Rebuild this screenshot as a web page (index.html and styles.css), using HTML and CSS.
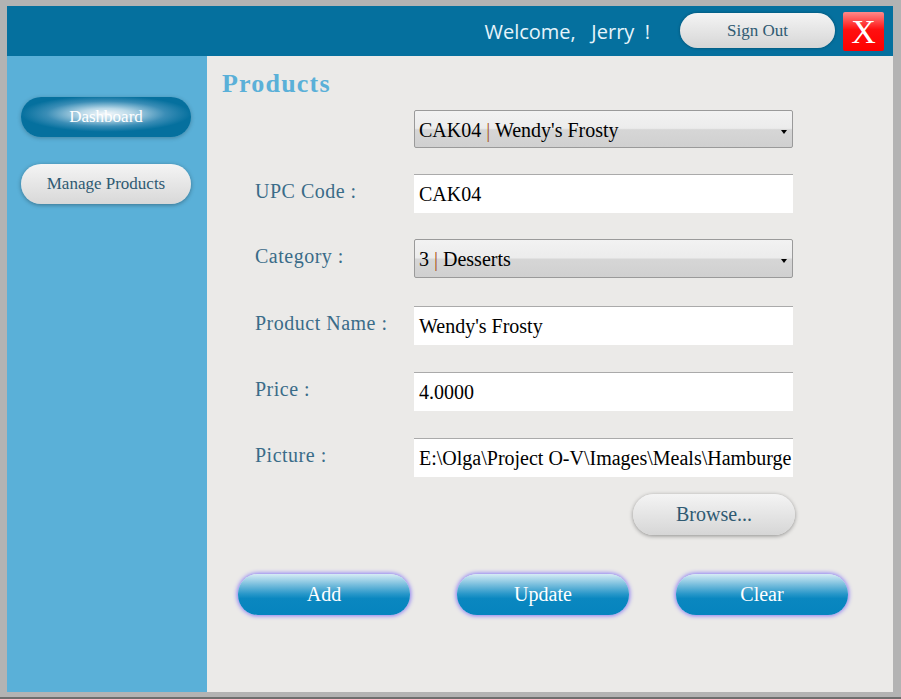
FILE: index.html
```html
<!DOCTYPE html>
<html>
<head>
<meta charset="utf-8">
<link rel="stylesheet" href="styles.css">
</head>
<body>
<div class="app">
  <header class="topbar">
    <span class="welcome">Welcome,&nbsp;&nbsp; Jerry &nbsp;!</span>
    <button class="signout">Sign Out</button>
    <button class="close">X</button>
  </header>
  <div class="main">
    <nav class="sidebar">
      <button class="nav-btn active">Dashboard</button>
      <button class="nav-btn">Manage Products</button>
    </nav>
    <section class="content">
      <h1 class="title">Products</h1>
      <div class="form">
        <span class="label"></span>
        <div class="select first"><span>CAK04 <i class="sep">|</i> Wendy's Frosty</span><b class="arrow"></b></div>
        <span class="label">UPC Code :</span>
        <div class="input">CAK04</div>
        <span class="label">Category :</span>
        <div class="select"><span>3 <i class="sep">|</i> Desserts</span><b class="arrow"></b></div>
        <span class="label">Product Name :</span>
        <div class="input">Wendy's Frosty</div>
        <span class="label">Price :</span>
        <div class="input">4.0000</div>
        <span class="label">Picture :</span>
        <div class="input">E:\Olga\Project O-V\Images\Meals\Hamburge</div>
      </div>
      <div class="browse-row">
        <button class="browse">Browse...</button>
      </div>
      <div class="actions">
        <button class="action">Add</button>
        <button class="action">Update</button>
        <button class="action">Clear</button>
      </div>
    </section>
  </div>
</div>
</body>
</html>
```

FILE: styles.css
```css
* { box-sizing: border-box; }
html, body { margin: 0; padding: 0; }
body {
  width: 901px;
  height: 699px;
  background: #b3b3b3;
  padding: 6px 8px 7px 7px;
  overflow: hidden;
  font-family: "Liberation Serif", serif;
  border-bottom: 2px solid #6e6e6e;
}
.app {
  width: 886px;
  height: 686px;
  display: flex;
  flex-direction: column;
}
.topbar {
  height: 50px;
  background: #05709e;
  display: flex;
  align-items: center;
  justify-content: flex-end;
  padding-right: 9px;
}
.welcome {
  font-family: "Open Sans", sans-serif;
  font-size: 20px;
  color: #e6f4fb;
  margin-right: 30px;
  margin-top: 1px;
  white-space: pre;
}
.signout {
  width: 155px;
  height: 35px;
  border: none;
  border-radius: 18px;
  background: linear-gradient(#f4f4f4, #d6d6d6);
  box-shadow: 0 0 3px rgba(0,0,0,0.35);
  font-family: "Liberation Serif", serif;
  font-size: 17px;
  color: #2f5a72;
  margin-right: 8px;
  margin-top: -1px;
}
.close {
  width: 41px;
  height: 39px;
  border: none;
  border-radius: 2px;
  background: linear-gradient(#ff8a8a 0%, #ff1010 45%, #ff0000 100%);
  color: #fff;
  font-family: "Liberation Serif", serif;
  font-size: 34px;
  line-height: 39px;
  padding: 0;
}
.main {
  flex: 1;
  display: flex;
}
.sidebar {
  width: 200px;
  background: #5ab0d8;
  display: flex;
  flex-direction: column;
  align-items: flex-start;
  padding: 41px 0 0 14px;
  gap: 27px;
}
.nav-btn {
  width: 170px;
  height: 40px;
  border: none;
  border-radius: 20px;
  background: linear-gradient(#f4f4f4, #d8d8d8);
  box-shadow: 0 1px 4px rgba(0,0,0,0.35);
  font-family: "Liberation Serif", serif;
  font-size: 17px;
  color: #2f5a72;
}
.nav-btn.active {
  background: radial-gradient(ellipse 50% 45% at 50% 42%, #f4f8fb 0%, #b8d8e8 30%, #3a8db6 70%, #05709e 100%);
  color: #fff;
  box-shadow: 0 1px 4px rgba(0,0,0,0.25);
}
.content {
  flex: 1;
  background: #ebeae8;
  padding: 12px 0 0 15px;
}
.title {
  margin: 0;
  font-family: "Liberation Serif", serif;
  font-weight: bold;
  font-size: 26px;
  letter-spacing: 1.2px;
  line-height: 32px;
  color: #5ab0d8;
  height: 42px;
}
.form {
  display: grid;
  grid-template-columns: 159px 379px;
  grid-template-rows: 64px 65px 67px 66px 66px 39px;
  margin-left: 33px;
}
.label {
  font-size: 20px;
  letter-spacing: 0.5px;
  color: #3a6c88;
  padding-top: 6px;
}
.input {
  height: 39px;
  background: #fff;
  border-top: 1px solid #aaaaaa;
  font-size: 20px;
  color: #000;
  padding: 8px 0 0 5px;
  white-space: nowrap;
  overflow: hidden;
}
.select {
  height: 39px;
  border: 1px solid #9a9a9a;
  border-radius: 2px;
  background: linear-gradient(#f2f2f2 0%, #ececec 48%, #d6d6d6 52%, #d0d0d0 100%);
  font-size: 20px;
  color: #000;
  padding: 8px 0 0 4px;
  display: flex;
  justify-content: space-between;
  white-space: nowrap;
}
.select.first { height: 38px; }
.sep { font-style: normal; color: #a8561a; }
.arrow {
  width: 0;
  height: 0;
  border-left: 3.5px solid transparent;
  border-right: 3.5px solid transparent;
  border-top: 4px solid #000;
  margin: 11px 5px 0 0;
}
.browse-row {
  width: 573px;
  display: flex;
  justify-content: flex-end;
  margin-top: 17px;
}
.browse {
  width: 162px;
  height: 41px;
  border: none;
  border-radius: 21px;
  background: linear-gradient(#f4f4f4, #d6d6d6);
  box-shadow: 0 1px 4px rgba(0,0,0,0.4);
  font-family: "Liberation Serif", serif;
  font-size: 20px;
  color: #2f5a72;
}
.actions {
  display: flex;
  gap: 47px;
  margin-top: 39px;
  padding-left: 16px;
}
.action {
  width: 172px;
  height: 41px;
  border: none;
  border-radius: 20px;
  background: linear-gradient(#d6ecf5 0%, #7cc0de 25%, #2a98ca 48%, #0a87c0 60%, #0684be 100%);
  box-shadow: 0 0 4px 1px #8a7cf4;
  font-family: "Liberation Serif", serif;
  font-size: 20px;
  color: #fff;
}
```
